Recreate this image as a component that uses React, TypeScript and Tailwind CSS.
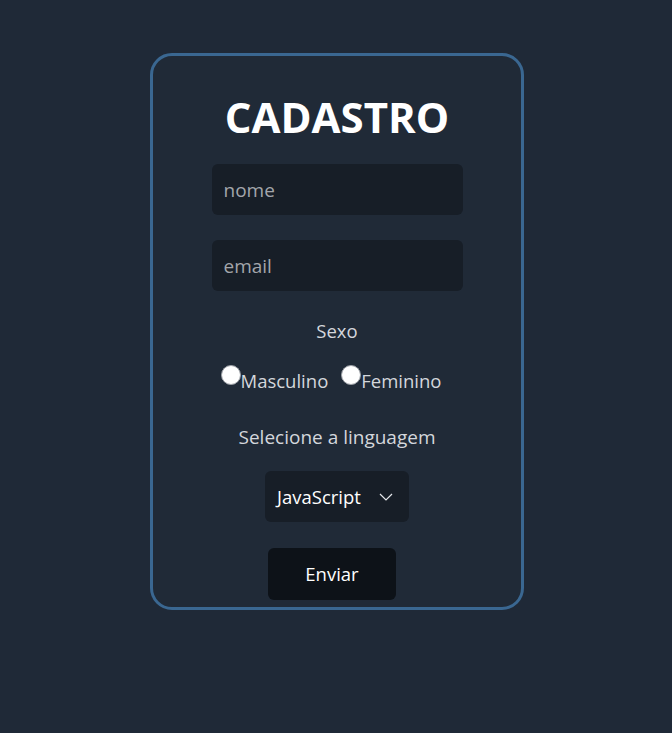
import { useState } from "react";

export default function App() {
  const [sexo, setSexo] = useState("");

  return (
    <div
      className="flex min-h-[733px] w-full justify-center bg-[#1f2937] pl-[2px] pt-[53px]"
      style={{ fontFamily: '"Open Sans", "Noto Sans", sans-serif' }}
    >
      <form
        onSubmit={(e) => e.preventDefault()}
        className="flex h-fit w-[374px] flex-col items-center rounded-[22px] border-[3px] border-[#3a6791] bg-[#202a37] pb-[7px] pt-[37px]"
      >
        <h1 className="text-[42px] font-bold leading-[48px] tracking-[0px] text-white">CADASTRO</h1>

        <input
          type="text"
          placeholder="nome"
          className="mt-[23px] h-[51px] w-[251px] rounded-[6px] bg-[#171e27] px-[12px] text-[19px] text-white placeholder:text-[#a3a6ab] outline-none"
        />
        <input
          type="email"
          placeholder="email"
          className="mt-[25px] h-[51px] w-[251px] rounded-[6px] bg-[#171e27] px-[12px] text-[19px] text-white placeholder:text-[#a3a6ab] outline-none"
        />

        <p className="mt-[27px] text-[18.5px] leading-[26px] text-[#d4d7dc]">Sexo</p>

        <div className="mt-[20px] flex items-start gap-[13px] pr-[12px] text-[18.5px] text-[#d4d7dc]">
          {["Masculino", "Feminino"].map((s) => (
            <label key={s} className="flex cursor-pointer items-start" onClick={() => setSexo(s)}>
              <span
                className={
                  "mt-[1px] h-[20px] w-[20px] rounded-full border border-[#9ca0a6] " +
                  (sexo === s ? "bg-[#3b82f6]" : "bg-white")
                }
              />
              <span className="mt-[5px] leading-[24px]">{s}</span>
            </label>
          ))}
        </div>

        <p className="mt-[31px] text-[19px] leading-[26px] text-[#d4d7dc]">Selecione a linguagem</p>

        <div className="mt-[21px] flex h-[51px] w-[144px] items-center justify-between rounded-[6px] bg-[#171e27] pl-[12px] pr-[16px] text-[18.5px] text-white">
          <span>JavaScript</span>
          <svg width="14" height="8" viewBox="0 0 14 8" fill="none" stroke="#e5e7eb" strokeWidth="1.2">
            <path d="M1 1l6 6 6-6" />
          </svg>
        </div>

        <button
          type="submit"
          className="mr-[10px] mt-[26px] h-[52px] w-[128px] rounded-[6px] bg-[#0d1218] text-[18.5px] text-white"
        >
          Enviar
        </button>
      </form>
    </div>
  );
}
